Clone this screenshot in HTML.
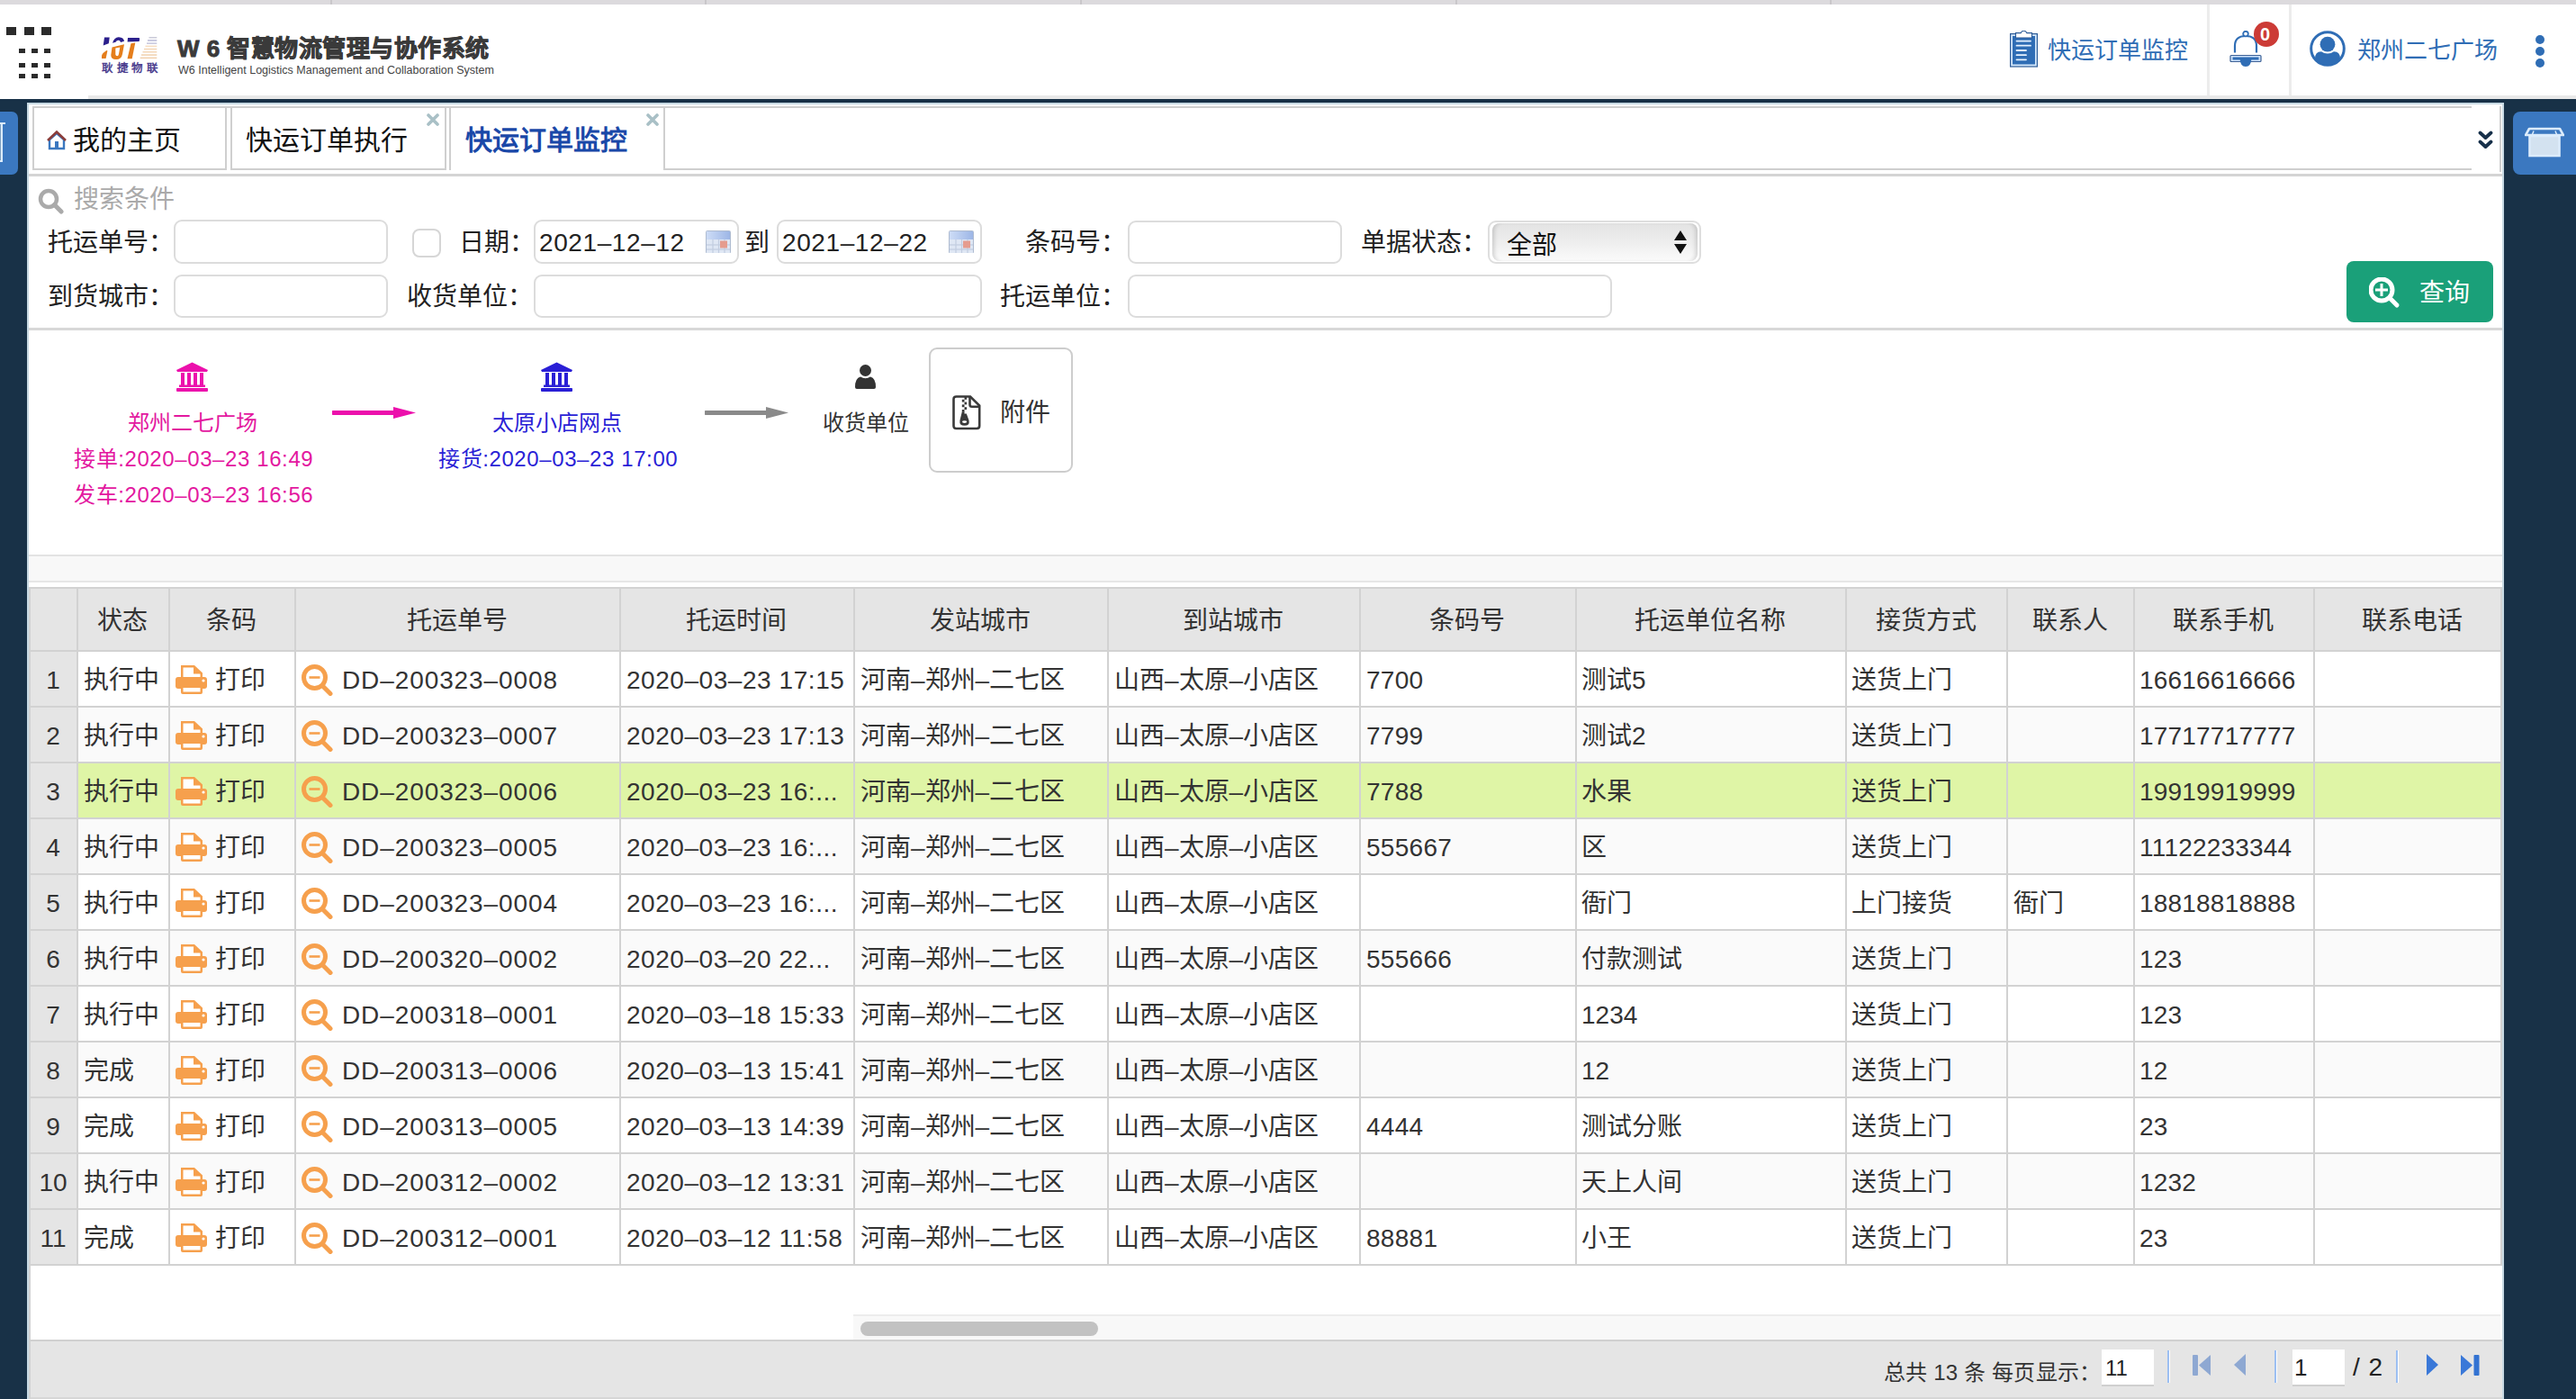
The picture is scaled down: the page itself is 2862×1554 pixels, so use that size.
<!DOCTYPE html><html lang="zh-CN"><head><meta charset="utf-8"><title>W6</title><style>
*{box-sizing:border-box}
html,body{margin:0;padding:0}
body{width:2862px;height:1554px;position:relative;overflow:hidden;background:#183147;font-family:"Liberation Sans",sans-serif}
.r{position:absolute;display:block}
.t{position:absolute;white-space:nowrap;line-height:1}
</style></head><body><div class="r" style="left:0px;top:0px;width:2862px;height:5px;background:#dcdadd"></div>
<div class="r" style="left:367px;top:0px;width:2px;height:5px;background:#c9c7ca"></div>
<div class="r" style="left:783px;top:0px;width:2px;height:5px;background:#c9c7ca"></div>
<div class="r" style="left:1200px;top:0px;width:2px;height:5px;background:#c9c7ca"></div>
<div class="r" style="left:1617px;top:0px;width:2px;height:5px;background:#c9c7ca"></div>
<div class="r" style="left:2033px;top:0px;width:2px;height:5px;background:#c9c7ca"></div>
<div class="r" style="left:0px;top:5px;width:2862px;height:101px;background:#fff"></div>
<div class="r" style="left:98px;top:106px;width:2764px;height:4px;background:#e8e8e8"></div>
<div class="r" style="left:0px;top:106px;width:98px;height:4px;background:#fff"></div>
<div class="r" style="left:7px;top:30px;width:11px;height:9px;background:#2b2b2b"></div>
<div class="r" style="left:27px;top:30px;width:11px;height:9px;background:#2b2b2b"></div>
<div class="r" style="left:46px;top:30px;width:11px;height:9px;background:#2b2b2b"></div>
<div class="r" style="left:21px;top:54px;width:7px;height:5px;background:#2b2b2b"></div>
<div class="r" style="left:35px;top:54px;width:7px;height:5px;background:#2b2b2b"></div>
<div class="r" style="left:49px;top:54px;width:7px;height:5px;background:#2b2b2b"></div>
<div class="r" style="left:21px;top:70px;width:7px;height:5px;background:#2b2b2b"></div>
<div class="r" style="left:35px;top:70px;width:7px;height:5px;background:#2b2b2b"></div>
<div class="r" style="left:49px;top:70px;width:7px;height:5px;background:#2b2b2b"></div>
<div class="r" style="left:21px;top:82px;width:7px;height:5px;background:#2b2b2b"></div>
<div class="r" style="left:35px;top:82px;width:7px;height:5px;background:#2b2b2b"></div>
<div class="r" style="left:49px;top:82px;width:7px;height:5px;background:#2b2b2b"></div>
<svg class="r" style="left:105px;top:35px" width="72" height="34" viewBox="0 0 72 34"><g fill="#2b1f8c"><path d="M11 6.5 L16.7 6.5 L15.8 13.2 L9.7 15.5 Z"/><path d="M20 12.8 Q22 6 27 6.2 Q32.5 6.5 33 10.7 L29 11.9 Q28.5 9.6 26.5 9.7 Q24.5 9.9 23.5 11.8 Z"/><path d="M37 6.9 L49.2 6.9 Q50.6 7.2 50.1 8.7 L49.6 10.9 L36.6 11.4 Z"/></g>
<g fill="#e57e1c"><path d="M8 29.9 L12.6 29.9 L14.4 21.5 Q14 20.6 13 21.3 L9.5 24 Q8.2 25.5 8 27 Z"/><path fill-rule="evenodd" d="M19.5 17.5 L33 14.2 L31 25 Q30 31 24 31 Q18 31 18.3 26 Z M23.3 18.6 L28.3 17.4 L27 25 Q26.6 27.2 25.2 27.2 Q23.6 27.2 23.3 25.5 Z"/><path d="M40.5 13.2 L45.3 12.6 L41.7 30.3 L36.5 30.3 Z"/></g>
<g><rect x="60.5" y="6" width="8.8" height="1.5" fill="#c9c9d8"/><rect x="59" y="9.2" width="10.3" height="1.5" fill="#b9b9d6"/><rect x="58" y="12.4" width="11.3" height="1.5" fill="#c6c6dc"/><rect x="56.5" y="15.6" width="12.8" height="1.5" fill="#f6dcc0"/><rect x="55" y="18.8" width="14.3" height="1.5" fill="#f3d6b6"/><rect x="53.5" y="22" width="15.8" height="1.5" fill="#f3d6b6"/><rect x="52" y="25.3" width="17.3" height="1.5" fill="#f0d0ac"/><rect x="50.7" y="28.6" width="18.6" height="1.5" fill="#f0d0ac"/></g></svg>
<div class="t" style="left:113px;top:70px;font-size:12.5px;color:#4d3f8f;font-weight:bold;letter-spacing:3.6px;font-family:"Liberation Serif",serif;-webkit-text-stroke:0.4px #4d3f8f">耿捷物联</div>
<div class="t" style="left:197px;top:41px;font-size:26px;color:#3a3a3a;font-weight:bold;letter-spacing:0.5px;-webkit-text-stroke:0.9px #3a3a3a">W 6 智慧物流管理与协作系统</div>
<div class="t" style="left:198px;top:72px;font-size:12.5px;color:#444;letter-spacing:0px">W6 Intelligent Logistics Management and Collaboration System</div>
<svg class="r" style="left:2233px;top:34px" width="31" height="41" viewBox="0 0 31 41"><rect x="0.6" y="3.6" width="29.8" height="36.4" fill="#d3e7fb" stroke="#2c5b98" stroke-width="1.2"/>
<rect x="3" y="6" width="25" height="31.5" fill="#2f6db5"/>
<path d="M6.5 8 V2.6 H12.2 Q13 0.3 15.5 0.3 Q18 0.3 18.8 2.6 H24.5 V8 Z" fill="#fff" stroke="#2c5b98" stroke-width="1.1"/>
<g stroke="#e6f2ff" stroke-width="1.8" stroke-linecap="round"><line x1="7.5" y1="11.6" x2="23" y2="11.6"/><line x1="7.5" y1="16.7" x2="23" y2="16.7"/><line x1="7.5" y1="22" x2="18" y2="22"/><line x1="7.5" y1="27.2" x2="18" y2="27.2"/><line x1="7.5" y1="32.3" x2="18" y2="32.3"/></g></svg>
<div class="t" style="left:2275px;top:43px;font-size:26px;color:#2f6db5;">快运订单监控</div>
<div class="r" style="left:2452px;top:5px;width:3px;height:101px;background:#ececec"></div>
<svg class="r" style="left:2477px;top:34px" width="36" height="41" viewBox="0 0 36 41"><path d="M6 24.5 V17 Q6 6 18 6 Q30 6 30 17 V24.5" fill="none" stroke="#2f6db5" stroke-width="2.2"/>
<circle cx="18" cy="3.6" r="2.8" fill="#fff" stroke="#2f6db5" stroke-width="1.8"/>
<rect x="1" y="27.5" width="34" height="7" rx="1" fill="#cfe3fa" stroke="#3a5f95" stroke-width="1.2"/>
<rect x="3.5" y="29.5" width="29" height="3" fill="#2f6db5"/>
<path d="M11.5 31 H24.5 Q24 40 18 40 Q12 40 11.5 31 Z" fill="#2f6db5"/></svg>
<div class="r" style="left:2504px;top:24px;width:28px;height:28px;background:#cc3b36;border-radius:50%"></div>
<div class="t" style="left:2511px;top:28px;font-size:20px;color:#fff;font-weight:bold">0</div>
<div class="r" style="left:2543px;top:5px;width:3px;height:101px;background:#ececec"></div>
<svg class="r" style="left:2566px;top:34px" width="40" height="40" viewBox="0 0 40 40"><defs><clipPath id="uc"><circle cx="20" cy="20" r="18"/></clipPath></defs>
<circle cx="20" cy="20" r="18.3" fill="#fff" stroke="#2f6db5" stroke-width="3"/>
<circle cx="20" cy="15.2" r="8.4" fill="#2f6db5"/>
<g clip-path="url(#uc)"><path d="M6 40 V31 Q6 23.5 13 23.2 Q16 25.5 20 25.5 Q24 25.5 27 23.2 Q34 23.5 34 31 V40 Z" fill="#2f6db5"/></g></svg>
<div class="t" style="left:2619px;top:43px;font-size:26px;color:#2f6db5;">郑州二七广场</div>
<div class="r" style="left:2817px;top:39px;width:10px;height:10px;background:#2f6db5;border-radius:50%"></div>
<div class="r" style="left:2817px;top:52px;width:10px;height:10px;background:#2f6db5;border-radius:50%"></div>
<div class="r" style="left:2817px;top:65px;width:10px;height:10px;background:#2f6db5;border-radius:50%"></div>
<div class="r" style="left:0px;top:124px;width:20px;height:70px;background:#3b78c0;border-radius:0 7px 7px 0"></div>
<div class="r" style="left:0px;top:136px;width:3px;height:44px;background:#7d9fc0;border-right:2px solid #dcecfb"></div>
<div class="r" style="left:0px;top:136px;width:6px;height:2px;background:#dcecfb"></div>
<div class="r" style="left:0px;top:178px;width:3px;height:2px;background:#dcecfb"></div>
<div class="r" style="left:2792px;top:124px;width:70px;height:70px;background:#3b78c0;border-radius:8px 0 0 8px"></div>
<svg class="r" style="left:2805px;top:141px" width="44" height="34" viewBox="0 0 44 34"><path d="M5 2 H39 L43 9 H1 Z" fill="none" stroke="#dcecfb" stroke-width="2.6" stroke-linejoin="round"/>
<rect x="5.5" y="10" width="33" height="22" fill="#d3e2f0" stroke="#dcecfb" stroke-width="2.6"/>
<path d="M8 9.5 L10 4.5 M36 9.5 L34 4.5" stroke="#dcecfb" stroke-width="1.5"/></svg>
<div class="r" style="left:30px;top:114px;width:2752px;height:1440px;background:#fff;border:2px solid #c7d9e3;border-bottom:none"></div>
<div class="r" style="left:36px;top:118px;width:2710px;height:2px;background:#cfcfcf"></div>
<div class="r" style="left:36px;top:118px;width:2px;height:71px;background:#cfcfcf"></div>
<div class="r" style="left:250px;top:118px;width:2px;height:71px;background:#cfcfcf"></div>
<div class="r" style="left:36px;top:187px;width:216px;height:2px;background:#cfcfcf"></div>
<div class="r" style="left:256px;top:118px;width:2px;height:71px;background:#cfcfcf"></div>
<div class="r" style="left:494px;top:118px;width:2px;height:71px;background:#cfcfcf"></div>
<div class="r" style="left:256px;top:187px;width:240px;height:2px;background:#cfcfcf"></div>
<div class="r" style="left:499px;top:118px;width:2px;height:71px;background:#cfcfcf"></div>
<div class="r" style="left:737px;top:118px;width:2px;height:71px;background:#cfcfcf"></div>
<div class="r" style="left:737px;top:187px;width:2009px;height:2px;background:#cfcfcf"></div>
<div class="r" style="left:32px;top:193px;width:2748px;height:3px;background:#d4d4d4"></div>
<svg class="r" style="left:52px;top:144px" width="22" height="23" viewBox="0 0 22 23"><path d="M3 21 V11 L11 4 L19 11 V21 Z" fill="#fff" stroke="#3b78c0" stroke-width="2.4"/>
<rect x="9" y="13" width="4" height="8" fill="#3b78c0"/>
<path d="M1 12 L11 2.5 L21 12" fill="none" stroke="#8b3d3a" stroke-width="2.6"/></svg>
<div class="t" style="left:81px;top:141px;font-size:30px;color:#111;">我的主页</div>
<div class="t" style="left:273px;top:141px;font-size:30px;color:#111;">快运订单执行</div>
<div class="t" style="left:517px;top:141px;font-size:30px;color:#1a48a8;font-weight:bold">快运订单监控</div>
<svg class="r" style="left:474px;top:126px" width="14" height="14" viewBox="0 0 14 14"><path d="M2 2 L12 12 M12 2 L2 12" stroke="#a9c0c6" stroke-width="3.6" stroke-linecap="round"/></svg>
<svg class="r" style="left:718px;top:126px" width="14" height="14" viewBox="0 0 14 14"><path d="M2 2 L12 12 M12 2 L2 12" stroke="#a9c0c6" stroke-width="3.6" stroke-linecap="round"/></svg>
<svg class="r" style="left:2753px;top:145px" width="17" height="21" viewBox="0 0 17 21"><path d="M2.5 2.5 L8.5 8 L14.5 2.5 M2.5 12.5 L8.5 18 L14.5 12.5" fill="none" stroke="#17304a" stroke-width="3.8" stroke-linecap="round" stroke-linejoin="round"/></svg>
<div class="r" style="left:2777px;top:118px;width:2px;height:73px;background:#cfcfcf"></div>
<svg class="r" style="left:42px;top:209px" width="29" height="29" viewBox="0 0 29 29"><circle cx="12" cy="12" r="9" fill="none" stroke="#aaa" stroke-width="4.5"/><path d="M18.5 18.5 L26 26" stroke="#aaa" stroke-width="5" stroke-linecap="round"/></svg>
<div class="t" style="left:82px;top:208px;font-size:28px;color:#aaa;">搜索条件</div>
<div class="t" style="left:53px;top:256px;font-size:28px;color:#222;">托运单号：</div>
<div class="r" style="left:193px;top:244px;width:238px;height:49px;background:#fff;border:2px solid #dcdcdc;border-radius:9px"></div>
<div class="r" style="left:458px;top:254px;width:32px;height:32px;background:#fff;border:2px solid #d6d6d6;border-radius:8px"></div>
<div class="t" style="left:510px;top:256px;font-size:28px;color:#222;">日期：</div>
<div class="r" style="left:593px;top:244px;width:228px;height:49px;background:#fff;border:2px solid #dcdcdc;border-radius:9px"></div>
<div class="t" style="left:599px;top:256px;font-size:28px;color:#222;letter-spacing:0.6px">2021–12–12</div>
<svg class="r" style="left:784px;top:256px" width="28" height="25" viewBox="0 0 28 25"><defs><linearGradient id="cg" x1="0" y1="0" x2="1" y2="0"><stop offset="0" stop-color="#cddcf6"/><stop offset="1" stop-color="#9db6e6"/></linearGradient></defs>
<rect x="0.5" y="0.5" width="27" height="25" rx="1" fill="#dfe7f4" stroke="#aebbd0"/>
<rect x="1" y="1" width="26" height="9" fill="url(#cg)"/>
<g stroke="#c2cde0" stroke-width="1.2"><line x1="8" y1="10" x2="8" y2="25"/><line x1="14.5" y1="10" x2="14.5" y2="25"/><line x1="21" y1="10" x2="21" y2="25"/><line x1="1" y1="16" x2="27" y2="16"/><line x1="1" y1="21" x2="27" y2="21"/></g>
<rect x="16" y="11.5" width="8" height="8" fill="#e59c8e"/></svg>
<div class="t" style="left:827px;top:256px;font-size:28px;color:#222;">到</div>
<div class="r" style="left:863px;top:244px;width:228px;height:49px;background:#fff;border:2px solid #dcdcdc;border-radius:9px"></div>
<div class="t" style="left:869px;top:256px;font-size:28px;color:#222;letter-spacing:0.6px">2021–12–22</div>
<svg class="r" style="left:1054px;top:256px" width="28" height="25" viewBox="0 0 28 25"><defs><linearGradient id="cg" x1="0" y1="0" x2="1" y2="0"><stop offset="0" stop-color="#cddcf6"/><stop offset="1" stop-color="#9db6e6"/></linearGradient></defs>
<rect x="0.5" y="0.5" width="27" height="25" rx="1" fill="#dfe7f4" stroke="#aebbd0"/>
<rect x="1" y="1" width="26" height="9" fill="url(#cg)"/>
<g stroke="#c2cde0" stroke-width="1.2"><line x1="8" y1="10" x2="8" y2="25"/><line x1="14.5" y1="10" x2="14.5" y2="25"/><line x1="21" y1="10" x2="21" y2="25"/><line x1="1" y1="16" x2="27" y2="16"/><line x1="1" y1="21" x2="27" y2="21"/></g>
<rect x="16" y="11.5" width="8" height="8" fill="#e59c8e"/></svg>
<div class="t" style="left:1139px;top:256px;font-size:28px;color:#222;">条码号：</div>
<div class="r" style="left:1253px;top:245px;width:238px;height:48px;background:#fff;border:2px solid #dcdcdc;border-radius:9px"></div>
<div class="t" style="left:1512px;top:256px;font-size:28px;color:#222;">单据状态：</div>
<div class="r" style="left:1653px;top:245px;width:237px;height:48px;background:#fff;border:2px solid #dedede;border-radius:9px"></div>
<div class="r" style="left:1658px;top:248px;width:228px;height:42px;background:linear-gradient(#e3e3e3,#efefef 55%,#fbfbfb);border-radius:8px;box-shadow:inset 5px 0 5px -3px rgba(0,0,0,0.16),inset -5px 0 5px -3px rgba(0,0,0,0.16)"></div>
<div class="t" style="left:1674px;top:259px;font-size:28px;color:#111;">全部</div>
<svg class="r" style="left:1860px;top:256px" width="14" height="26" viewBox="0 0 14 26"><path d="M0 11 L7 0 L14 11 Z M0 15 L7 26 L14 15 Z" fill="#111"/></svg>
<div class="t" style="left:53px;top:316px;font-size:28px;color:#222;">到货城市：</div>
<div class="r" style="left:193px;top:305px;width:238px;height:48px;background:#fff;border:2px solid #dcdcdc;border-radius:9px"></div>
<div class="t" style="left:452px;top:316px;font-size:28px;color:#222;">收货单位：</div>
<div class="r" style="left:593px;top:305px;width:498px;height:48px;background:#fff;border:2px solid #dcdcdc;border-radius:9px"></div>
<div class="t" style="left:1111px;top:316px;font-size:28px;color:#222;">托运单位：</div>
<div class="r" style="left:1253px;top:305px;width:538px;height:48px;background:#fff;border:2px solid #dcdcdc;border-radius:9px"></div>
<div class="r" style="left:2607px;top:290px;width:163px;height:68px;background:#1aa079;border-radius:8px"></div>
<svg class="r" style="left:2632px;top:308px" width="35" height="36" viewBox="0 0 35 36"><circle cx="14" cy="14" r="12" fill="none" stroke="#fff" stroke-width="5"/><path d="M7 14 H21 M14 7 V21" stroke="#fff" stroke-width="3"/><path d="M23 23 L31 31" stroke="#fff" stroke-width="5" stroke-linecap="round"/></svg>
<div class="t" style="left:2688px;top:312px;font-size:28px;color:#fff;">查询</div>
<div class="r" style="left:32px;top:364px;width:2748px;height:3px;background:#d8d8d8"></div>
<svg class="r" style="left:196px;top:402px" width="35" height="33" viewBox="0 0 35 33"><path d="M17.5 0.5 L35 9 L34 11 L1 11 L0 9 Z" fill="#ec10ac"/>
<rect x="5" y="12" width="4" height="14" fill="#ec10ac"/><rect x="12" y="12" width="4" height="14" fill="#ec10ac"/><rect x="19" y="12" width="4" height="14" fill="#ec10ac"/><rect x="26" y="12" width="4" height="14" fill="#ec10ac"/>
<rect x="3" y="25.5" width="29" height="2.5" fill="#ec10ac"/><rect x="0" y="29" width="35" height="4" rx="1" fill="#ec10ac"/></svg>
<div class="t" style="left:142px;top:458px;font-size:24px;color:#e3189f;">郑州二七广场</div>
<div class="t" style="left:82px;top:498px;font-size:24px;color:#e3189f;letter-spacing:0.6px">接单:2020–03–23 16:49</div>
<div class="t" style="left:82px;top:538px;font-size:24px;color:#e3189f;letter-spacing:0.6px">发车:2020–03–23 16:56</div>
<svg class="r" style="left:369px;top:450px" width="94" height="17" viewBox="0 0 94 17"><path d="M1 8.5 H70" stroke="#ec10ac" stroke-width="5" stroke-linecap="round"/><path d="M68 2 L93 8.5 L68 15 Z" fill="#ec10ac"/></svg>
<svg class="r" style="left:601px;top:402px" width="35" height="33" viewBox="0 0 35 33"><path d="M17.5 0.5 L35 9 L34 11 L1 11 L0 9 Z" fill="#2a1fd6"/>
<rect x="5" y="12" width="4" height="14" fill="#2a1fd6"/><rect x="12" y="12" width="4" height="14" fill="#2a1fd6"/><rect x="19" y="12" width="4" height="14" fill="#2a1fd6"/><rect x="26" y="12" width="4" height="14" fill="#2a1fd6"/>
<rect x="3" y="25.5" width="29" height="2.5" fill="#2a1fd6"/><rect x="0" y="29" width="35" height="4" rx="1" fill="#2a1fd6"/></svg>
<div class="t" style="left:547px;top:458px;font-size:24px;color:#2a1fd6;">太原小店网点</div>
<div class="t" style="left:487px;top:498px;font-size:24px;color:#2a1fd6;letter-spacing:0.6px">接货:2020–03–23 17:00</div>
<svg class="r" style="left:783px;top:450px" width="94" height="17" viewBox="0 0 94 17"><path d="M1 8.5 H70" stroke="#8a8a8a" stroke-width="5" stroke-linecap="round"/><path d="M68 2 L93 8.5 L68 15 Z" fill="#8a8a8a"/></svg>
<svg class="r" style="left:950px;top:405px" width="23" height="27" viewBox="0 0 23 27"><circle cx="11.5" cy="6.5" r="6.5" fill="#333"/><path d="M0 25 Q0 15 6 13.5 Q11.5 17 17 13.5 Q23 15 23 25 Q23 27 21 27 H2 Q0 27 0 25Z" fill="#333"/></svg>
<div class="t" style="left:914px;top:458px;font-size:24px;color:#333;">收货单位</div>
<div class="r" style="left:1032px;top:386px;width:160px;height:139px;border:2px solid #cdcdcd;border-radius:9px;background:#fff"></div>
<svg class="r" style="left:1057px;top:439px" width="34" height="40" viewBox="0 0 34 40"><path d="M2.5 4.5 Q2.5 1.5 5.5 1.5 H21 L31.2 11.5 V34 Q31.2 37 28.2 37 H5.5 Q2.5 37 2.5 34 Z" fill="none" stroke="#3a3a3a" stroke-width="2.6"/>
<path d="M20.5 1.5 V10.5 Q20.5 12.8 22.8 12.8 H31" fill="none" stroke="#3a3a3a" stroke-width="2.6"/>
<g fill="#3a3a3a"><rect x="14.5" y="2" width="2.6" height="2.8"/><rect x="11.8" y="4.8" width="2.7" height="2.8"/><rect x="14.5" y="7.6" width="2.6" height="2.8"/><rect x="11.8" y="10.4" width="2.7" height="2.8"/><rect x="14.5" y="13.2" width="2.6" height="2.8"/><rect x="11.8" y="16" width="2.7" height="2.8"/></g>
<path d="M11.8 18.6 H14.5 V20.5 H16.8 L19.6 28.3 Q20.6 33.8 14.6 33.8 Q8.6 33.8 9.4 28.3 Z" fill="#3a3a3a"/><ellipse cx="14.6" cy="29.6" rx="2.6" ry="1.4" fill="#fff"/></svg>
<div class="t" style="left:1111px;top:445px;font-size:28px;color:#333;">附件</div>
<div class="r" style="left:32px;top:616px;width:2748px;height:2px;background:#e3e3e3"></div>
<div class="r" style="left:32px;top:618px;width:2748px;height:27px;background:#f8f8f8"></div>
<div class="r" style="left:32px;top:645px;width:2748px;height:2px;background:#e6e6e6"></div>
<div class="r" style="left:34px;top:654px;width:2744px;height:68px;background:#e5e5e5"></div>
<div class="r" style="left:85px;top:724px;width:2693px;height:60px;background:#fff"></div>
<div class="r" style="left:34px;top:724px;width:51px;height:60px;background:#e5e5e5"></div>
<div class="r" style="left:85px;top:786px;width:2693px;height:60px;background:#fafafa"></div>
<div class="r" style="left:34px;top:786px;width:51px;height:60px;background:#e5e5e5"></div>
<div class="r" style="left:85px;top:848px;width:2693px;height:60px;background:#dff5a6"></div>
<div class="r" style="left:34px;top:848px;width:51px;height:60px;background:#e5e5e5"></div>
<div class="r" style="left:85px;top:910px;width:2693px;height:60px;background:#fafafa"></div>
<div class="r" style="left:34px;top:910px;width:51px;height:60px;background:#e5e5e5"></div>
<div class="r" style="left:85px;top:972px;width:2693px;height:60px;background:#fff"></div>
<div class="r" style="left:34px;top:972px;width:51px;height:60px;background:#e5e5e5"></div>
<div class="r" style="left:85px;top:1034px;width:2693px;height:60px;background:#fafafa"></div>
<div class="r" style="left:34px;top:1034px;width:51px;height:60px;background:#e5e5e5"></div>
<div class="r" style="left:85px;top:1096px;width:2693px;height:60px;background:#fff"></div>
<div class="r" style="left:34px;top:1096px;width:51px;height:60px;background:#e5e5e5"></div>
<div class="r" style="left:85px;top:1158px;width:2693px;height:60px;background:#fafafa"></div>
<div class="r" style="left:34px;top:1158px;width:51px;height:60px;background:#e5e5e5"></div>
<div class="r" style="left:85px;top:1220px;width:2693px;height:60px;background:#fff"></div>
<div class="r" style="left:34px;top:1220px;width:51px;height:60px;background:#e5e5e5"></div>
<div class="r" style="left:85px;top:1282px;width:2693px;height:60px;background:#fafafa"></div>
<div class="r" style="left:34px;top:1282px;width:51px;height:60px;background:#e5e5e5"></div>
<div class="r" style="left:85px;top:1344px;width:2693px;height:60px;background:#fff"></div>
<div class="r" style="left:34px;top:1344px;width:51px;height:60px;background:#e5e5e5"></div>
<div class="r" style="left:32px;top:652px;width:2746px;height:2px;background:#d2d2d2"></div>
<div class="r" style="left:32px;top:722px;width:2746px;height:2px;background:#d2d2d2"></div>
<div class="r" style="left:32px;top:784px;width:2746px;height:2px;background:#d2d2d2"></div>
<div class="r" style="left:32px;top:846px;width:2746px;height:2px;background:#d2d2d2"></div>
<div class="r" style="left:32px;top:908px;width:2746px;height:2px;background:#d2d2d2"></div>
<div class="r" style="left:32px;top:970px;width:2746px;height:2px;background:#d2d2d2"></div>
<div class="r" style="left:32px;top:1032px;width:2746px;height:2px;background:#d2d2d2"></div>
<div class="r" style="left:32px;top:1094px;width:2746px;height:2px;background:#d2d2d2"></div>
<div class="r" style="left:32px;top:1156px;width:2746px;height:2px;background:#d2d2d2"></div>
<div class="r" style="left:32px;top:1218px;width:2746px;height:2px;background:#d2d2d2"></div>
<div class="r" style="left:32px;top:1280px;width:2746px;height:2px;background:#d2d2d2"></div>
<div class="r" style="left:32px;top:1342px;width:2746px;height:2px;background:#d2d2d2"></div>
<div class="r" style="left:32px;top:1404px;width:2746px;height:2px;background:#d2d2d2"></div>
<div class="r" style="left:32px;top:652px;width:2px;height:902px;background:#d2d2d2"></div>
<div class="r" style="left:85px;top:652px;width:2px;height:754px;background:#d2d2d2"></div>
<div class="r" style="left:187px;top:652px;width:2px;height:754px;background:#d2d2d2"></div>
<div class="r" style="left:327px;top:652px;width:2px;height:754px;background:#d2d2d2"></div>
<div class="r" style="left:688px;top:652px;width:2px;height:754px;background:#d2d2d2"></div>
<div class="r" style="left:948px;top:652px;width:2px;height:754px;background:#d2d2d2"></div>
<div class="r" style="left:1230px;top:652px;width:2px;height:754px;background:#d2d2d2"></div>
<div class="r" style="left:1510px;top:652px;width:2px;height:754px;background:#d2d2d2"></div>
<div class="r" style="left:1750px;top:652px;width:2px;height:754px;background:#d2d2d2"></div>
<div class="r" style="left:2050px;top:652px;width:2px;height:754px;background:#d2d2d2"></div>
<div class="r" style="left:2229px;top:652px;width:2px;height:754px;background:#d2d2d2"></div>
<div class="r" style="left:2370px;top:652px;width:2px;height:754px;background:#d2d2d2"></div>
<div class="r" style="left:2570px;top:652px;width:2px;height:754px;background:#d2d2d2"></div>
<div class="r" style="left:2778px;top:652px;width:2px;height:754px;background:#d2d2d2"></div>
<div class="t" style="left:85px;top:676px;width:102px;text-align:center;font-size:28px;color:#333">状态</div>
<div class="t" style="left:187px;top:676px;width:140px;text-align:center;font-size:28px;color:#333">条码</div>
<div class="t" style="left:327px;top:676px;width:361px;text-align:center;font-size:28px;color:#333">托运单号</div>
<div class="t" style="left:688px;top:676px;width:260px;text-align:center;font-size:28px;color:#333">托运时间</div>
<div class="t" style="left:948px;top:676px;width:282px;text-align:center;font-size:28px;color:#333">发站城市</div>
<div class="t" style="left:1230px;top:676px;width:280px;text-align:center;font-size:28px;color:#333">到站城市</div>
<div class="t" style="left:1510px;top:676px;width:240px;text-align:center;font-size:28px;color:#333">条码号</div>
<div class="t" style="left:1750px;top:676px;width:300px;text-align:center;font-size:28px;color:#333">托运单位名称</div>
<div class="t" style="left:2050px;top:676px;width:179px;text-align:center;font-size:28px;color:#333">接货方式</div>
<div class="t" style="left:2229px;top:676px;width:141px;text-align:center;font-size:28px;color:#333">联系人</div>
<div class="t" style="left:2370px;top:676px;width:200px;text-align:center;font-size:28px;color:#333">联系手机</div>
<div class="t" style="left:2570px;top:676px;width:220px;text-align:center;font-size:28px;color:#333">联系电话</div>
<div class="t" style="left:33px;top:742px;width:52px;text-align:center;font-size:28px;color:#333">1</div>
<div class="t" style="left:93px;top:742px;font-size:28px;color:#333;">执行中</div>
<svg class="r" style="left:195px;top:738px" width="35" height="34" viewBox="0 0 35 34"><path d="M6 1 H21 L30 9.5 V16 H6 Z" fill="#f6a04d"/><path d="M8.5 3.5 H20 L27.5 10.5 V14 H8.5 Z" fill="#fff"/><path d="M20 1 V10.5 H29" fill="#f6a04d"/>
<rect x="0" y="14" width="35" height="13" rx="3" fill="#f6a04d"/><circle cx="31" cy="18" r="1.6" fill="#fff"/>
<rect x="6" y="24" width="24" height="9" rx="2" fill="#f6a04d"/><rect x="8.5" y="26" width="19" height="4.5" fill="#fff"/></svg>
<div class="t" style="left:239px;top:742px;font-size:28px;color:#333;">打印</div>
<svg class="r" style="left:335px;top:738px" width="35" height="35" viewBox="0 0 35 35"><circle cx="14.5" cy="14.5" r="12" fill="none" stroke="#f6a04d" stroke-width="5"/><path d="M8.5 14.5 H20.5" stroke="#f6a04d" stroke-width="2.6"/><path d="M23.5 24 L32 32.5" stroke="#f6a04d" stroke-width="5" stroke-linecap="round"/></svg>
<div class="t" style="left:380px;top:742px;font-size:28px;color:#333;letter-spacing:0.9px">DD–200323–0008</div>
<div class="t" style="left:696px;top:742px;font-size:28px;color:#333;letter-spacing:0.55px">2020–03–23 17:15</div>
<div class="t" style="left:956px;top:742px;font-size:28px;color:#333;">河南–郑州–二七区</div>
<div class="t" style="left:1238px;top:742px;font-size:28px;color:#333;">山西–太原–小店区</div>
<div class="t" style="left:1518px;top:742px;font-size:28px;color:#333;letter-spacing:0.3px">7700</div>
<div class="t" style="left:1757px;top:742px;font-size:28px;color:#333;">测试5</div>
<div class="t" style="left:2057px;top:742px;font-size:28px;color:#333;">送货上门</div>
<div class="t" style="left:2237px;top:742px;font-size:28px;color:#333;"></div>
<div class="t" style="left:2377px;top:742px;font-size:28px;color:#333;letter-spacing:0.2px">16616616666</div>
<div class="t" style="left:33px;top:804px;width:52px;text-align:center;font-size:28px;color:#333">2</div>
<div class="t" style="left:93px;top:804px;font-size:28px;color:#333;">执行中</div>
<svg class="r" style="left:195px;top:800px" width="35" height="34" viewBox="0 0 35 34"><path d="M6 1 H21 L30 9.5 V16 H6 Z" fill="#f6a04d"/><path d="M8.5 3.5 H20 L27.5 10.5 V14 H8.5 Z" fill="#fff"/><path d="M20 1 V10.5 H29" fill="#f6a04d"/>
<rect x="0" y="14" width="35" height="13" rx="3" fill="#f6a04d"/><circle cx="31" cy="18" r="1.6" fill="#fff"/>
<rect x="6" y="24" width="24" height="9" rx="2" fill="#f6a04d"/><rect x="8.5" y="26" width="19" height="4.5" fill="#fff"/></svg>
<div class="t" style="left:239px;top:804px;font-size:28px;color:#333;">打印</div>
<svg class="r" style="left:335px;top:800px" width="35" height="35" viewBox="0 0 35 35"><circle cx="14.5" cy="14.5" r="12" fill="none" stroke="#f6a04d" stroke-width="5"/><path d="M8.5 14.5 H20.5" stroke="#f6a04d" stroke-width="2.6"/><path d="M23.5 24 L32 32.5" stroke="#f6a04d" stroke-width="5" stroke-linecap="round"/></svg>
<div class="t" style="left:380px;top:804px;font-size:28px;color:#333;letter-spacing:0.9px">DD–200323–0007</div>
<div class="t" style="left:696px;top:804px;font-size:28px;color:#333;letter-spacing:0.55px">2020–03–23 17:13</div>
<div class="t" style="left:956px;top:804px;font-size:28px;color:#333;">河南–郑州–二七区</div>
<div class="t" style="left:1238px;top:804px;font-size:28px;color:#333;">山西–太原–小店区</div>
<div class="t" style="left:1518px;top:804px;font-size:28px;color:#333;letter-spacing:0.3px">7799</div>
<div class="t" style="left:1757px;top:804px;font-size:28px;color:#333;">测试2</div>
<div class="t" style="left:2057px;top:804px;font-size:28px;color:#333;">送货上门</div>
<div class="t" style="left:2237px;top:804px;font-size:28px;color:#333;"></div>
<div class="t" style="left:2377px;top:804px;font-size:28px;color:#333;letter-spacing:0.2px">17717717777</div>
<div class="t" style="left:33px;top:866px;width:52px;text-align:center;font-size:28px;color:#333">3</div>
<div class="t" style="left:93px;top:866px;font-size:28px;color:#333;">执行中</div>
<svg class="r" style="left:195px;top:862px" width="35" height="34" viewBox="0 0 35 34"><path d="M6 1 H21 L30 9.5 V16 H6 Z" fill="#f6a04d"/><path d="M8.5 3.5 H20 L27.5 10.5 V14 H8.5 Z" fill="#fff"/><path d="M20 1 V10.5 H29" fill="#f6a04d"/>
<rect x="0" y="14" width="35" height="13" rx="3" fill="#f6a04d"/><circle cx="31" cy="18" r="1.6" fill="#fff"/>
<rect x="6" y="24" width="24" height="9" rx="2" fill="#f6a04d"/><rect x="8.5" y="26" width="19" height="4.5" fill="#fff"/></svg>
<div class="t" style="left:239px;top:866px;font-size:28px;color:#333;">打印</div>
<svg class="r" style="left:335px;top:862px" width="35" height="35" viewBox="0 0 35 35"><circle cx="14.5" cy="14.5" r="12" fill="none" stroke="#f6a04d" stroke-width="5"/><path d="M8.5 14.5 H20.5" stroke="#f6a04d" stroke-width="2.6"/><path d="M23.5 24 L32 32.5" stroke="#f6a04d" stroke-width="5" stroke-linecap="round"/></svg>
<div class="t" style="left:380px;top:866px;font-size:28px;color:#333;letter-spacing:0.9px">DD–200323–0006</div>
<div class="t" style="left:696px;top:866px;font-size:28px;color:#333;letter-spacing:0.55px">2020–03–23 16:...</div>
<div class="t" style="left:956px;top:866px;font-size:28px;color:#333;">河南–郑州–二七区</div>
<div class="t" style="left:1238px;top:866px;font-size:28px;color:#333;">山西–太原–小店区</div>
<div class="t" style="left:1518px;top:866px;font-size:28px;color:#333;letter-spacing:0.3px">7788</div>
<div class="t" style="left:1757px;top:866px;font-size:28px;color:#333;">水果</div>
<div class="t" style="left:2057px;top:866px;font-size:28px;color:#333;">送货上门</div>
<div class="t" style="left:2237px;top:866px;font-size:28px;color:#333;"></div>
<div class="t" style="left:2377px;top:866px;font-size:28px;color:#333;letter-spacing:0.2px">19919919999</div>
<div class="t" style="left:33px;top:928px;width:52px;text-align:center;font-size:28px;color:#333">4</div>
<div class="t" style="left:93px;top:928px;font-size:28px;color:#333;">执行中</div>
<svg class="r" style="left:195px;top:924px" width="35" height="34" viewBox="0 0 35 34"><path d="M6 1 H21 L30 9.5 V16 H6 Z" fill="#f6a04d"/><path d="M8.5 3.5 H20 L27.5 10.5 V14 H8.5 Z" fill="#fff"/><path d="M20 1 V10.5 H29" fill="#f6a04d"/>
<rect x="0" y="14" width="35" height="13" rx="3" fill="#f6a04d"/><circle cx="31" cy="18" r="1.6" fill="#fff"/>
<rect x="6" y="24" width="24" height="9" rx="2" fill="#f6a04d"/><rect x="8.5" y="26" width="19" height="4.5" fill="#fff"/></svg>
<div class="t" style="left:239px;top:928px;font-size:28px;color:#333;">打印</div>
<svg class="r" style="left:335px;top:924px" width="35" height="35" viewBox="0 0 35 35"><circle cx="14.5" cy="14.5" r="12" fill="none" stroke="#f6a04d" stroke-width="5"/><path d="M8.5 14.5 H20.5" stroke="#f6a04d" stroke-width="2.6"/><path d="M23.5 24 L32 32.5" stroke="#f6a04d" stroke-width="5" stroke-linecap="round"/></svg>
<div class="t" style="left:380px;top:928px;font-size:28px;color:#333;letter-spacing:0.9px">DD–200323–0005</div>
<div class="t" style="left:696px;top:928px;font-size:28px;color:#333;letter-spacing:0.55px">2020–03–23 16:...</div>
<div class="t" style="left:956px;top:928px;font-size:28px;color:#333;">河南–郑州–二七区</div>
<div class="t" style="left:1238px;top:928px;font-size:28px;color:#333;">山西–太原–小店区</div>
<div class="t" style="left:1518px;top:928px;font-size:28px;color:#333;letter-spacing:0.3px">555667</div>
<div class="t" style="left:1757px;top:928px;font-size:28px;color:#333;">区</div>
<div class="t" style="left:2057px;top:928px;font-size:28px;color:#333;">送货上门</div>
<div class="t" style="left:2237px;top:928px;font-size:28px;color:#333;"></div>
<div class="t" style="left:2377px;top:928px;font-size:28px;color:#333;letter-spacing:0.2px">11122233344</div>
<div class="t" style="left:33px;top:990px;width:52px;text-align:center;font-size:28px;color:#333">5</div>
<div class="t" style="left:93px;top:990px;font-size:28px;color:#333;">执行中</div>
<svg class="r" style="left:195px;top:986px" width="35" height="34" viewBox="0 0 35 34"><path d="M6 1 H21 L30 9.5 V16 H6 Z" fill="#f6a04d"/><path d="M8.5 3.5 H20 L27.5 10.5 V14 H8.5 Z" fill="#fff"/><path d="M20 1 V10.5 H29" fill="#f6a04d"/>
<rect x="0" y="14" width="35" height="13" rx="3" fill="#f6a04d"/><circle cx="31" cy="18" r="1.6" fill="#fff"/>
<rect x="6" y="24" width="24" height="9" rx="2" fill="#f6a04d"/><rect x="8.5" y="26" width="19" height="4.5" fill="#fff"/></svg>
<div class="t" style="left:239px;top:990px;font-size:28px;color:#333;">打印</div>
<svg class="r" style="left:335px;top:986px" width="35" height="35" viewBox="0 0 35 35"><circle cx="14.5" cy="14.5" r="12" fill="none" stroke="#f6a04d" stroke-width="5"/><path d="M8.5 14.5 H20.5" stroke="#f6a04d" stroke-width="2.6"/><path d="M23.5 24 L32 32.5" stroke="#f6a04d" stroke-width="5" stroke-linecap="round"/></svg>
<div class="t" style="left:380px;top:990px;font-size:28px;color:#333;letter-spacing:0.9px">DD–200323–0004</div>
<div class="t" style="left:696px;top:990px;font-size:28px;color:#333;letter-spacing:0.55px">2020–03–23 16:...</div>
<div class="t" style="left:956px;top:990px;font-size:28px;color:#333;">河南–郑州–二七区</div>
<div class="t" style="left:1238px;top:990px;font-size:28px;color:#333;">山西–太原–小店区</div>
<div class="t" style="left:1518px;top:990px;font-size:28px;color:#333;letter-spacing:0.3px"></div>
<div class="t" style="left:1757px;top:990px;font-size:28px;color:#333;">衙门</div>
<div class="t" style="left:2057px;top:990px;font-size:28px;color:#333;">上门接货</div>
<div class="t" style="left:2237px;top:990px;font-size:28px;color:#333;">衙门</div>
<div class="t" style="left:2377px;top:990px;font-size:28px;color:#333;letter-spacing:0.2px">18818818888</div>
<div class="t" style="left:33px;top:1052px;width:52px;text-align:center;font-size:28px;color:#333">6</div>
<div class="t" style="left:93px;top:1052px;font-size:28px;color:#333;">执行中</div>
<svg class="r" style="left:195px;top:1048px" width="35" height="34" viewBox="0 0 35 34"><path d="M6 1 H21 L30 9.5 V16 H6 Z" fill="#f6a04d"/><path d="M8.5 3.5 H20 L27.5 10.5 V14 H8.5 Z" fill="#fff"/><path d="M20 1 V10.5 H29" fill="#f6a04d"/>
<rect x="0" y="14" width="35" height="13" rx="3" fill="#f6a04d"/><circle cx="31" cy="18" r="1.6" fill="#fff"/>
<rect x="6" y="24" width="24" height="9" rx="2" fill="#f6a04d"/><rect x="8.5" y="26" width="19" height="4.5" fill="#fff"/></svg>
<div class="t" style="left:239px;top:1052px;font-size:28px;color:#333;">打印</div>
<svg class="r" style="left:335px;top:1048px" width="35" height="35" viewBox="0 0 35 35"><circle cx="14.5" cy="14.5" r="12" fill="none" stroke="#f6a04d" stroke-width="5"/><path d="M8.5 14.5 H20.5" stroke="#f6a04d" stroke-width="2.6"/><path d="M23.5 24 L32 32.5" stroke="#f6a04d" stroke-width="5" stroke-linecap="round"/></svg>
<div class="t" style="left:380px;top:1052px;font-size:28px;color:#333;letter-spacing:0.9px">DD–200320–0002</div>
<div class="t" style="left:696px;top:1052px;font-size:28px;color:#333;letter-spacing:0.55px">2020–03–20 22...</div>
<div class="t" style="left:956px;top:1052px;font-size:28px;color:#333;">河南–郑州–二七区</div>
<div class="t" style="left:1238px;top:1052px;font-size:28px;color:#333;">山西–太原–小店区</div>
<div class="t" style="left:1518px;top:1052px;font-size:28px;color:#333;letter-spacing:0.3px">555666</div>
<div class="t" style="left:1757px;top:1052px;font-size:28px;color:#333;">付款测试</div>
<div class="t" style="left:2057px;top:1052px;font-size:28px;color:#333;">送货上门</div>
<div class="t" style="left:2237px;top:1052px;font-size:28px;color:#333;"></div>
<div class="t" style="left:2377px;top:1052px;font-size:28px;color:#333;letter-spacing:0.2px">123</div>
<div class="t" style="left:33px;top:1114px;width:52px;text-align:center;font-size:28px;color:#333">7</div>
<div class="t" style="left:93px;top:1114px;font-size:28px;color:#333;">执行中</div>
<svg class="r" style="left:195px;top:1110px" width="35" height="34" viewBox="0 0 35 34"><path d="M6 1 H21 L30 9.5 V16 H6 Z" fill="#f6a04d"/><path d="M8.5 3.5 H20 L27.5 10.5 V14 H8.5 Z" fill="#fff"/><path d="M20 1 V10.5 H29" fill="#f6a04d"/>
<rect x="0" y="14" width="35" height="13" rx="3" fill="#f6a04d"/><circle cx="31" cy="18" r="1.6" fill="#fff"/>
<rect x="6" y="24" width="24" height="9" rx="2" fill="#f6a04d"/><rect x="8.5" y="26" width="19" height="4.5" fill="#fff"/></svg>
<div class="t" style="left:239px;top:1114px;font-size:28px;color:#333;">打印</div>
<svg class="r" style="left:335px;top:1110px" width="35" height="35" viewBox="0 0 35 35"><circle cx="14.5" cy="14.5" r="12" fill="none" stroke="#f6a04d" stroke-width="5"/><path d="M8.5 14.5 H20.5" stroke="#f6a04d" stroke-width="2.6"/><path d="M23.5 24 L32 32.5" stroke="#f6a04d" stroke-width="5" stroke-linecap="round"/></svg>
<div class="t" style="left:380px;top:1114px;font-size:28px;color:#333;letter-spacing:0.9px">DD–200318–0001</div>
<div class="t" style="left:696px;top:1114px;font-size:28px;color:#333;letter-spacing:0.55px">2020–03–18 15:33</div>
<div class="t" style="left:956px;top:1114px;font-size:28px;color:#333;">河南–郑州–二七区</div>
<div class="t" style="left:1238px;top:1114px;font-size:28px;color:#333;">山西–太原–小店区</div>
<div class="t" style="left:1518px;top:1114px;font-size:28px;color:#333;letter-spacing:0.3px"></div>
<div class="t" style="left:1757px;top:1114px;font-size:28px;color:#333;">1234</div>
<div class="t" style="left:2057px;top:1114px;font-size:28px;color:#333;">送货上门</div>
<div class="t" style="left:2237px;top:1114px;font-size:28px;color:#333;"></div>
<div class="t" style="left:2377px;top:1114px;font-size:28px;color:#333;letter-spacing:0.2px">123</div>
<div class="t" style="left:33px;top:1176px;width:52px;text-align:center;font-size:28px;color:#333">8</div>
<div class="t" style="left:93px;top:1176px;font-size:28px;color:#333;">完成</div>
<svg class="r" style="left:195px;top:1172px" width="35" height="34" viewBox="0 0 35 34"><path d="M6 1 H21 L30 9.5 V16 H6 Z" fill="#f6a04d"/><path d="M8.5 3.5 H20 L27.5 10.5 V14 H8.5 Z" fill="#fff"/><path d="M20 1 V10.5 H29" fill="#f6a04d"/>
<rect x="0" y="14" width="35" height="13" rx="3" fill="#f6a04d"/><circle cx="31" cy="18" r="1.6" fill="#fff"/>
<rect x="6" y="24" width="24" height="9" rx="2" fill="#f6a04d"/><rect x="8.5" y="26" width="19" height="4.5" fill="#fff"/></svg>
<div class="t" style="left:239px;top:1176px;font-size:28px;color:#333;">打印</div>
<svg class="r" style="left:335px;top:1172px" width="35" height="35" viewBox="0 0 35 35"><circle cx="14.5" cy="14.5" r="12" fill="none" stroke="#f6a04d" stroke-width="5"/><path d="M8.5 14.5 H20.5" stroke="#f6a04d" stroke-width="2.6"/><path d="M23.5 24 L32 32.5" stroke="#f6a04d" stroke-width="5" stroke-linecap="round"/></svg>
<div class="t" style="left:380px;top:1176px;font-size:28px;color:#333;letter-spacing:0.9px">DD–200313–0006</div>
<div class="t" style="left:696px;top:1176px;font-size:28px;color:#333;letter-spacing:0.55px">2020–03–13 15:41</div>
<div class="t" style="left:956px;top:1176px;font-size:28px;color:#333;">河南–郑州–二七区</div>
<div class="t" style="left:1238px;top:1176px;font-size:28px;color:#333;">山西–太原–小店区</div>
<div class="t" style="left:1518px;top:1176px;font-size:28px;color:#333;letter-spacing:0.3px"></div>
<div class="t" style="left:1757px;top:1176px;font-size:28px;color:#333;">12</div>
<div class="t" style="left:2057px;top:1176px;font-size:28px;color:#333;">送货上门</div>
<div class="t" style="left:2237px;top:1176px;font-size:28px;color:#333;"></div>
<div class="t" style="left:2377px;top:1176px;font-size:28px;color:#333;letter-spacing:0.2px">12</div>
<div class="t" style="left:33px;top:1238px;width:52px;text-align:center;font-size:28px;color:#333">9</div>
<div class="t" style="left:93px;top:1238px;font-size:28px;color:#333;">完成</div>
<svg class="r" style="left:195px;top:1234px" width="35" height="34" viewBox="0 0 35 34"><path d="M6 1 H21 L30 9.5 V16 H6 Z" fill="#f6a04d"/><path d="M8.5 3.5 H20 L27.5 10.5 V14 H8.5 Z" fill="#fff"/><path d="M20 1 V10.5 H29" fill="#f6a04d"/>
<rect x="0" y="14" width="35" height="13" rx="3" fill="#f6a04d"/><circle cx="31" cy="18" r="1.6" fill="#fff"/>
<rect x="6" y="24" width="24" height="9" rx="2" fill="#f6a04d"/><rect x="8.5" y="26" width="19" height="4.5" fill="#fff"/></svg>
<div class="t" style="left:239px;top:1238px;font-size:28px;color:#333;">打印</div>
<svg class="r" style="left:335px;top:1234px" width="35" height="35" viewBox="0 0 35 35"><circle cx="14.5" cy="14.5" r="12" fill="none" stroke="#f6a04d" stroke-width="5"/><path d="M8.5 14.5 H20.5" stroke="#f6a04d" stroke-width="2.6"/><path d="M23.5 24 L32 32.5" stroke="#f6a04d" stroke-width="5" stroke-linecap="round"/></svg>
<div class="t" style="left:380px;top:1238px;font-size:28px;color:#333;letter-spacing:0.9px">DD–200313–0005</div>
<div class="t" style="left:696px;top:1238px;font-size:28px;color:#333;letter-spacing:0.55px">2020–03–13 14:39</div>
<div class="t" style="left:956px;top:1238px;font-size:28px;color:#333;">河南–郑州–二七区</div>
<div class="t" style="left:1238px;top:1238px;font-size:28px;color:#333;">山西–太原–小店区</div>
<div class="t" style="left:1518px;top:1238px;font-size:28px;color:#333;letter-spacing:0.3px">4444</div>
<div class="t" style="left:1757px;top:1238px;font-size:28px;color:#333;">测试分账</div>
<div class="t" style="left:2057px;top:1238px;font-size:28px;color:#333;">送货上门</div>
<div class="t" style="left:2237px;top:1238px;font-size:28px;color:#333;"></div>
<div class="t" style="left:2377px;top:1238px;font-size:28px;color:#333;letter-spacing:0.2px">23</div>
<div class="t" style="left:33px;top:1300px;width:52px;text-align:center;font-size:28px;color:#333">10</div>
<div class="t" style="left:93px;top:1300px;font-size:28px;color:#333;">执行中</div>
<svg class="r" style="left:195px;top:1296px" width="35" height="34" viewBox="0 0 35 34"><path d="M6 1 H21 L30 9.5 V16 H6 Z" fill="#f6a04d"/><path d="M8.5 3.5 H20 L27.5 10.5 V14 H8.5 Z" fill="#fff"/><path d="M20 1 V10.5 H29" fill="#f6a04d"/>
<rect x="0" y="14" width="35" height="13" rx="3" fill="#f6a04d"/><circle cx="31" cy="18" r="1.6" fill="#fff"/>
<rect x="6" y="24" width="24" height="9" rx="2" fill="#f6a04d"/><rect x="8.5" y="26" width="19" height="4.5" fill="#fff"/></svg>
<div class="t" style="left:239px;top:1300px;font-size:28px;color:#333;">打印</div>
<svg class="r" style="left:335px;top:1296px" width="35" height="35" viewBox="0 0 35 35"><circle cx="14.5" cy="14.5" r="12" fill="none" stroke="#f6a04d" stroke-width="5"/><path d="M8.5 14.5 H20.5" stroke="#f6a04d" stroke-width="2.6"/><path d="M23.5 24 L32 32.5" stroke="#f6a04d" stroke-width="5" stroke-linecap="round"/></svg>
<div class="t" style="left:380px;top:1300px;font-size:28px;color:#333;letter-spacing:0.9px">DD–200312–0002</div>
<div class="t" style="left:696px;top:1300px;font-size:28px;color:#333;letter-spacing:0.55px">2020–03–12 13:31</div>
<div class="t" style="left:956px;top:1300px;font-size:28px;color:#333;">河南–郑州–二七区</div>
<div class="t" style="left:1238px;top:1300px;font-size:28px;color:#333;">山西–太原–小店区</div>
<div class="t" style="left:1518px;top:1300px;font-size:28px;color:#333;letter-spacing:0.3px"></div>
<div class="t" style="left:1757px;top:1300px;font-size:28px;color:#333;">天上人间</div>
<div class="t" style="left:2057px;top:1300px;font-size:28px;color:#333;">送货上门</div>
<div class="t" style="left:2237px;top:1300px;font-size:28px;color:#333;"></div>
<div class="t" style="left:2377px;top:1300px;font-size:28px;color:#333;letter-spacing:0.2px">1232</div>
<div class="t" style="left:33px;top:1362px;width:52px;text-align:center;font-size:28px;color:#333">11</div>
<div class="t" style="left:93px;top:1362px;font-size:28px;color:#333;">完成</div>
<svg class="r" style="left:195px;top:1358px" width="35" height="34" viewBox="0 0 35 34"><path d="M6 1 H21 L30 9.5 V16 H6 Z" fill="#f6a04d"/><path d="M8.5 3.5 H20 L27.5 10.5 V14 H8.5 Z" fill="#fff"/><path d="M20 1 V10.5 H29" fill="#f6a04d"/>
<rect x="0" y="14" width="35" height="13" rx="3" fill="#f6a04d"/><circle cx="31" cy="18" r="1.6" fill="#fff"/>
<rect x="6" y="24" width="24" height="9" rx="2" fill="#f6a04d"/><rect x="8.5" y="26" width="19" height="4.5" fill="#fff"/></svg>
<div class="t" style="left:239px;top:1362px;font-size:28px;color:#333;">打印</div>
<svg class="r" style="left:335px;top:1358px" width="35" height="35" viewBox="0 0 35 35"><circle cx="14.5" cy="14.5" r="12" fill="none" stroke="#f6a04d" stroke-width="5"/><path d="M8.5 14.5 H20.5" stroke="#f6a04d" stroke-width="2.6"/><path d="M23.5 24 L32 32.5" stroke="#f6a04d" stroke-width="5" stroke-linecap="round"/></svg>
<div class="t" style="left:380px;top:1362px;font-size:28px;color:#333;letter-spacing:0.9px">DD–200312–0001</div>
<div class="t" style="left:696px;top:1362px;font-size:28px;color:#333;letter-spacing:0.55px">2020–03–12 11:58</div>
<div class="t" style="left:956px;top:1362px;font-size:28px;color:#333;">河南–郑州–二七区</div>
<div class="t" style="left:1238px;top:1362px;font-size:28px;color:#333;">山西–太原–小店区</div>
<div class="t" style="left:1518px;top:1362px;font-size:28px;color:#333;letter-spacing:0.3px">88881</div>
<div class="t" style="left:1757px;top:1362px;font-size:28px;color:#333;">小王</div>
<div class="t" style="left:2057px;top:1362px;font-size:28px;color:#333;">送货上门</div>
<div class="t" style="left:2237px;top:1362px;font-size:28px;color:#333;"></div>
<div class="t" style="left:2377px;top:1362px;font-size:28px;color:#333;letter-spacing:0.2px">23</div>
<div class="r" style="left:948px;top:1460px;width:1830px;height:2px;background:#ececec"></div>
<div class="r" style="left:948px;top:1462px;width:1830px;height:27px;background:#f8f8f8"></div>
<div class="r" style="left:956px;top:1468px;width:264px;height:16px;background:#c2c2c2;border-radius:8px"></div>
<div class="r" style="left:32px;top:1488px;width:2748px;height:2px;background:#d0d0d0"></div>
<div class="r" style="left:34px;top:1490px;width:2746px;height:64px;background:#e5e5e5"></div>
<div class="t" style="left:2093px;top:1513px;font-size:24px;color:#333;letter-spacing:0.2px">总共 13 条 每页显示：</div>
<div class="r" style="left:2335px;top:1499px;width:58px;height:41px;background:#fff;border-bottom:2px solid #cfcfcf"></div>
<div class="t" style="left:2339px;top:1508px;font-size:24px;color:#222;">11</div>
<div class="r" style="left:2408px;top:1500px;width:2px;height:36px;background:#9cbff2;border-right:1px solid #fff;width:3px"></div>
<svg class="r" style="left:2435px;top:1504px" width="22" height="24" viewBox="0 0 22 24"><rect x="1" y="1" width="6" height="23" rx="1" fill="#8ea8d2"/><path d="M21 1 V24 L8 12.5 Z" fill="#8ea8d2"/></svg>
<svg class="r" style="left:2482px;top:1504px" width="14" height="24" viewBox="0 0 14 24"><path d="M13 0 V24 L0 12 Z" fill="#8ea8d2"/></svg>
<div class="r" style="left:2527px;top:1500px;width:2px;height:36px;background:#9cbff2;border-right:1px solid #fff;width:3px"></div>
<div class="r" style="left:2547px;top:1499px;width:58px;height:41px;background:#fff;border-bottom:2px solid #cfcfcf"></div>
<div class="t" style="left:2549px;top:1506px;font-size:26px;color:#222;">1</div>
<div class="t" style="left:2614px;top:1505px;font-size:28px;color:#222;letter-spacing:1px">/ 2</div>
<div class="r" style="left:2662px;top:1500px;width:2px;height:36px;background:#9cbff2;border-right:1px solid #fff;width:3px"></div>
<svg class="r" style="left:2695px;top:1504px" width="14" height="24" viewBox="0 0 14 24"><path d="M1 0 V24 L14 12 Z" fill="#3a78d8"/></svg>
<svg class="r" style="left:2734px;top:1504px" width="21" height="24" viewBox="0 0 21 24"><path d="M0 1 V24 L13 12.5 Z" fill="#3a78d8"/><rect x="14.5" y="1" width="6" height="23" rx="1" fill="#3373d2"/></svg>
<div class="r" style="left:34px;top:1552px;width:2746px;height:2px;background:#d6d6d6"></div></body></html>
